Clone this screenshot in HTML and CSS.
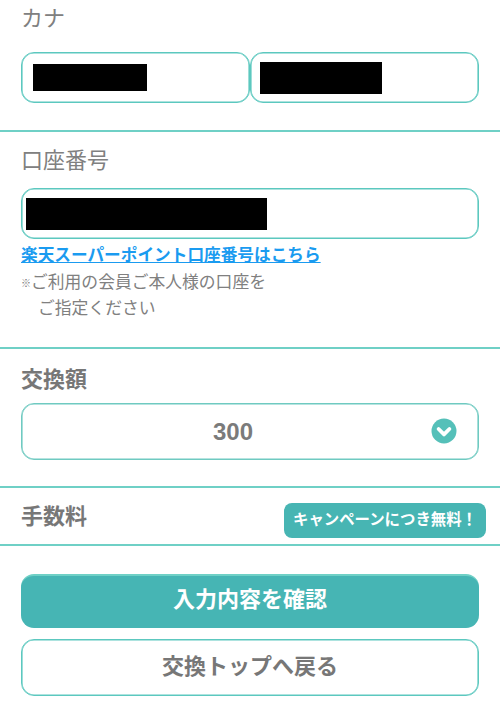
FILE: index.html
```html
<!DOCTYPE html>
<html lang="ja">
<head>
<meta charset="utf-8">
<title>交換</title>
<link rel="stylesheet" href="styles.css">
</head>
<body>
<section class="sec sec-kana">
  <div class="label">カナ</div>
  <div class="pair">
    <div class="field field-a"><span class="redact redact-a"></span></div>
    <div class="field field-b"><span class="redact redact-b"></span></div>
  </div>
</section>
<section class="sec sec-account">
  <div class="label">口座番号</div>
  <div class="field field-c"><span class="redact redact-c"></span></div>
  <a class="link" href="#">楽天スーパーポイント口座番号はこちら</a>
  <p class="note"><span class="mark">※</span>ご利用の会員ご本人様の口座を<br><span class="indent">ご指定ください</span></p>
</section>
<section class="sec sec-amount">
  <div class="label label-bold">交換額</div>
  <div class="select">
    <span class="select-value">300</span>
    <svg class="chev" viewBox="0 0 26 26" width="26" height="26" aria-hidden="true">
      <circle cx="13" cy="13" r="12.5" fill="#55c0b9"/>
      <path d="M7.6 11 13 16.4 18.4 11" fill="none" stroke="#fff" stroke-width="3.8" stroke-linecap="round" stroke-linejoin="round"/>
    </svg>
  </div>
</section>
<section class="sec sec-fee">
  <div class="label label-bold">手数料</div>
  <span class="badge">キャンペーンにつき無料！</span>
</section>
<div class="actions">
  <button class="btn btn-primary">入力内容を確認</button>
  <button class="btn btn-secondary">交換トップへ戻る</button>
</div>
</body>
</html>
```
FILE: styles.css
```css
* { box-sizing: border-box; }
html, body { margin: 0; padding: 0; background: #fff; }
body {
  width: 500px;
  height: 722px;
  overflow: hidden;
  font-family: "Noto Sans CJK JP", "Liberation Sans", sans-serif;
  color: #7b7b7b;
}
.sec { border-bottom: 2px solid #6fd0c6; padding: 0 21px; }
.label { font-size: 22px; line-height: 32px; color: #808080; }
.label-bold { font-weight: 700; color: #777; }
.sec-kana { height: 132px; }
.pair { display: grid; grid-template-columns: 1fr 1fr; margin-top: 20px; }
.field {
  border: 1px solid #5cc8bf;
  box-shadow: inset 0 0 0 0.6px #5cc8bf;
  border-radius: 13px;
  height: 51px;
  display: flex;
  align-items: center;
  background: #fff;
}
.field-a { padding-left: 11px; }
.field-b { padding-left: 9px; }
.field-c { padding-left: 4px; margin-top: 14px; }
.redact { display: block; background: #000; }
.redact-a { width: 114px; height: 27px; }
.redact-b { width: 122px; height: 32px; }
.redact-c { width: 241px; height: 32px; }
.sec-account { height: 217px; padding-top: 12px; }
.sec-account .label { margin-top: -2px; margin-bottom: 1px; }
.link {
  display: block;
  margin-top: 3px;
  font-size: 16.67px;
  line-height: 24px;
  font-weight: 700;
  color: #1a9bf0;
  text-decoration: underline;
  white-space: nowrap;
}
.note { margin: 2px 0 0; font-size: 16.8px; line-height: 26px; color: #808080; white-space: nowrap; }
.mark { font-size: 10px; line-height: 1; display: inline-block; width: 10px; vertical-align: 1px; color: #777; }
.indent { padding-left: 17px; }
.sec-amount { height: 139px; padding-top: 13px; }
.sec-amount .label { margin-top: -1px; }
.select {
  position: relative;
  margin-top: 10px;
  height: 57px;
  border: 1px solid #6fcac1;
  box-shadow: inset 0 0 0 0.6px #6fcac1;
  border-radius: 13px;
  display: flex;
  align-items: center;
  justify-content: center;
  padding-right: 34px;
}
.select-value { font-family: "Liberation Sans", sans-serif; font-weight: 700; font-size: 24px; color: #7b7b7b; }
.chev { position: absolute; right: 21px; top: 14px; }
.sec-fee {
  height: 58px;
  display: flex;
  align-items: center;
  justify-content: space-between;
  padding-right: 14px;
}
.sec-fee .label { margin-top: -4px; }
.badge {
  width: 202px;
  height: 35px;
  margin-top: 9px;
  background: #47b5b3;
  border-radius: 8px;
  color: #fff;
  font-size: 15.4px;
  font-weight: 700;
  line-height: 31px;
  text-align: center;
  white-space: nowrap;
}
.actions { padding: 28px 21px 0; display: flex; flex-direction: column; gap: 11px; }
.btn {
  width: 100%;
  font-family: inherit;
  font-weight: 700;
  font-size: 22px;
  padding: 0;
  border-radius: 13px;
}
.btn-primary {
  height: 54px;
  background: #46b5b4;
  border: none;
  border-top: 2px solid #6fd0c6;
  color: #fff;
  padding-bottom: 10px;
}
.btn-secondary {
  height: 57px;
  background: #fff;
  border: 1px solid #5cc8bf;
  box-shadow: inset 0 0 0 0.6px #5cc8bf;
  color: #777;
  padding-bottom: 7px;
}
```
